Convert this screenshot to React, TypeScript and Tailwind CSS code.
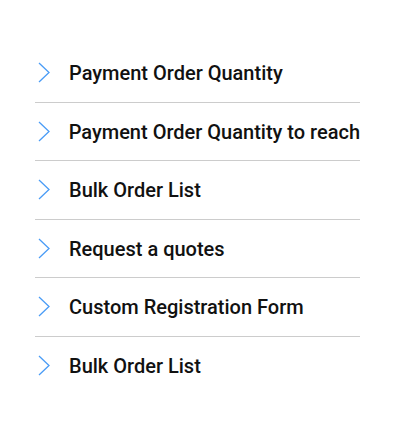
const items = [
  'Payment Order Quantity',
  'Payment Order Quantity to reach',
  'Bulk Order List',
  'Request a quotes',
  'Custom Registration Form',
  'Bulk Order List',
];

function Chevron() {
  return (
    <svg width="14" height="21" viewBox="0 0 14 21" fill="none" className="shrink-0">
      <path d="M2 1 L12 10.5 L2 20" stroke="#4a9cf6" strokeWidth="1.3" />
    </svg>
  );
}

export default function App() {
  return (
    <div className="w-[418px] h-[443px] bg-white pt-[44px] pl-[35px]" style={{ fontFamily: 'Roboto, sans-serif' }}>
      <ul className="w-[325px]">
        {items.map((label, i) => (
          <li
            key={i}
            className={`flex items-center h-[58.5px] ${i < items.length - 1 ? 'border-b border-[#cccccc]' : ''}`}
          >
            <div className="ml-[2px] w-[32px]">
              <Chevron />
            </div>
            <span className="text-[20px] font-medium text-[#111111] whitespace-nowrap pt-[1px]">{label}</span>
          </li>
        ))}
      </ul>
    </div>
  );
}
